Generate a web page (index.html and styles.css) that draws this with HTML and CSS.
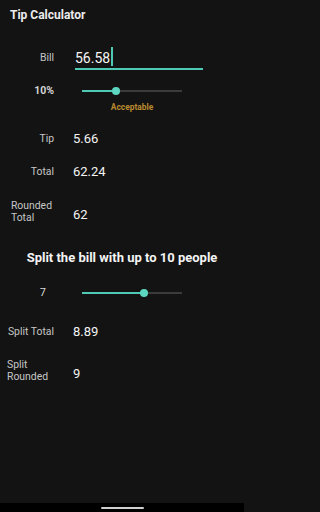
FILE: index.html
```html
<!DOCTYPE html>
<html>
<head>
<meta charset="utf-8">
<link rel="stylesheet" href="styles.css">
</head>
<body>
<div class="screen">
  <header class="title">Tip Calculator</header>

  <div class="row row-bill">
    <div class="label">Bill</div>
    <div class="field"><span class="field-text">56.58</span><span class="cursor"></span></div>
  </div>

  <div class="row row-slider">
    <div class="label label-bold">10%</div>
    <div class="slider">
      <div class="track-active" style="width:34px"></div>
      <div class="thumb"></div>
      <div class="track-rest"></div>
    </div>
  </div>
  <div class="rating">Acceptable</div>

  <div class="row row-value row-tip">
    <div class="label">Tip</div>
    <div class="value">5.66</div>
  </div>

  <div class="row row-value row-total">
    <div class="label">Total</div>
    <div class="value">62.24</div>
  </div>

  <div class="row row-multi row-rounded">
    <div class="label"><span class="multi">Rounded<br>Total</span></div>
    <div class="value value-low">62</div>
  </div>

  <h2 class="split-heading">Split the bill with up to 10 people</h2>

  <div class="row row-slider row-people">
    <div class="label label-people">7</div>
    <div class="slider">
      <div class="track-active" style="width:62px"></div>
      <div class="thumb"></div>
      <div class="track-rest"></div>
    </div>
  </div>

  <div class="row row-value row-split-total">
    <div class="label">Split Total</div>
    <div class="value">8.89</div>
  </div>

  <div class="row row-multi row-split-rounded">
    <div class="label label-start"><span class="multi">Split<br>Rounded</span></div>
    <div class="value value-low">9</div>
  </div>

  <div class="spacer"></div>
  <div class="navbar"><div class="handle"></div></div>
</div>
</body>
</html>
```
FILE: styles.css
```css
* { box-sizing: border-box; }
html, body { margin: 0; padding: 0; background: #131313; }
body { font-family: Roboto, "Noto Sans", "Liberation Sans", sans-serif; color: #f2f2f2; }

.screen {
  width: 244px;
  height: 512px;
  display: flex;
  flex-direction: column;
  background: #131313;
}

.title {
  height: 30px;
  line-height: 30px;
  padding-left: 10px;
  font-size: 12px;
  font-weight: 700;
  color: #ececec;
}

.row {
  display: flex;
  align-items: center;
  gap: 19px;
  padding-left: 7px;
}

.label {
  width: 47px;
  flex: none;
  text-align: right;
  font-size: 10.4px;
  line-height: 12px;
  color: #c6c6c6;
}
.label-bold { font-weight: 700; font-size: 10.5px; color: #d4d4d4; }
.label-people { font-size: 11px; color: #d8d8d8; padding-right: 8px; }
.label-start { text-align: left; }
.multi { display: inline-block; text-align: left; }

.value {
  font-size: 13px;
  line-height: 20px;
  color: #f4f4f4;
}
.value-low { padding-top: 6px; }

/* Bill input */
.row-bill { margin-top: 18px; height: 22px; align-items: flex-start; }
.row-bill .label { line-height: 20px; }
.field {
  margin-left: 2px;
  width: 128px;
  height: 22px;
  border-bottom: 2px solid #4fc9b4;
  display: flex;
  align-items: flex-start;
}
.field-text { font-size: 14px; line-height: 20px; color: #f6f6f6; }
.cursor {
  width: 1.5px;
  height: 19px;
  margin-top: -1px;
  margin-left: 1px;
  background: #4fc9b4;
}

/* Sliders */
.row-slider { margin-top: 13px; height: 16px; }
.slider {
  margin-left: 9px;
  width: 100px;
  height: 8px;
  display: flex;
  align-items: center;
}
.track-active { height: 2px; background: #4fc9b4; flex: none; }
.thumb {
  width: 8px;
  height: 8px;
  border-radius: 50%;
  background: #5dd6c1;
  flex: none;
  margin-left: -4px;
  margin-right: -4px;
  position: relative;
  z-index: 1;
}
.track-rest { height: 1.5px; flex: 1; background: #3b3b3b; }

.rating {
  margin-top: 3px;
  margin-left: 82px;
  width: 100px;
  text-align: center;
  font-size: 8.4px;
  line-height: 10px;
  font-weight: 700;
  color: #b88a2f;
}

.row-value { height: 20px; }
.row-tip { margin-top: 17px; }
.row-total { margin-top: 13px; }

.row-multi { height: 26px; }
.row-rounded { margin-top: 17px; }
.row-rounded .label { padding-right: 2px; }

.split-heading {
  margin: 25px 0 0;
  height: 16px;
  line-height: 16px;
  text-align: center;
  font-size: 13px;
  font-weight: 700;
  color: #f4f4f4;
}

.row-people { margin-top: 19px; }
.row-split-total { margin-top: 21px; }
.row-split-rounded { margin-top: 16px; }

.spacer { flex: 1; }
.navbar {
  height: 9px;
  background: #000;
  display: flex;
  justify-content: center;
  align-items: center;
}
.handle {
  width: 43px;
  height: 2px;
  border-radius: 1px;
  background: #cfcfcf;
}
```
